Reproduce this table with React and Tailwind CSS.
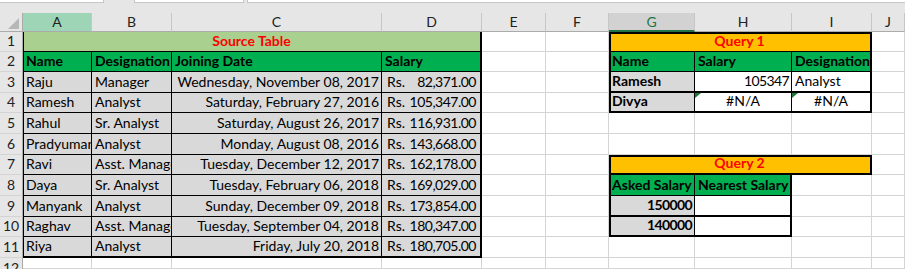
import React from 'react';

const R = { g: 'border-r border-r-[#d4d4d4]', k: 'border-r border-r-black', K: 'border-r-2 border-r-black' };
const B = { g: 'border-b border-b-[#d4d4d4]', k: 'border-b border-b-black', K: 'border-b-2 border-b-black' };
const SH = {
  n: '',
  l1: 'shadow-[inset_1px_0_0_#000]',
  l2: 'shadow-[inset_2px_0_0_#000]',
  l2t2: 'shadow-[inset_2px_0_0_#000,inset_0_2px_0_#000]',
};
const BG = { w: 'bg-white', gr: 'bg-[#d9d9d9]', gn: 'bg-[#00b050]', lg: 'bg-[#a9d08e]', or: 'bg-[#ffc000]' };
const AL = {
  l: 'justify-start pl-[3px]',
  r: 'justify-end pr-[2px]',
  c: 'justify-center',
  s: 'justify-between pl-[5px] pr-[4px]',
};
const SPAN = { 1: '', 3: 'col-span-3', 4: 'col-span-4' };

function Cell({ span = 1, bg = 'w', r = 'g', b = 'g', sh = 'n', al = 'l', bold = false, red = false, tri = false, num = false, children }) {
  return (
    <div
      className={[
        'relative flex items-end overflow-hidden whitespace-nowrap pb-[2px] leading-[16px]',
        SPAN[span],
        BG[bg],
        R[r],
        B[b],
        SH[sh],
        AL[al],
        bold ? 'font-bold' : '',
        red ? 'text-[#ff0000]' : 'text-black',
        num ? 'tracking-[-0.6px]' : '',
      ].join(' ')}
    >
      {tri && (
        <svg className="absolute left-0 top-0" width="6" height="5" viewBox="0 0 6 5">
          <polygon points="0,0 6,0 0,5" fill="#1e7a3c" />
        </svg>
      )}
      {children}
    </div>
  );
}

function RowHead({ n, cut = false }) {
  if (cut) {
    return (
      <div className="overflow-hidden bg-[#e6e6e6] border-r border-r-[#ababab] text-[#222]">
        <div className="h-[20px] flex items-end justify-center pb-[2px] leading-[16px]">{n}</div>
      </div>
    );
  }
  return (
    <div className="flex items-end justify-center pb-[2px] leading-[16px] bg-[#e6e6e6] border-r border-r-[#ababab] border-b border-b-[#d4d4d4] text-[#222]">
      {n}
    </div>
  );
}

function ColHead({ children, variant = 'n' }) {
  const v = {
    n: 'bg-[#e6e6e6] border-b border-b-[#ababab] text-[#222]',
    a: 'bg-[#9fd5b7] border-b border-b-[#ababab] text-[#222]',
    g: 'bg-[#d2d2d2] border-b-2 border-b-[#217346] text-[#217346]',
  }[variant];
  return (
    <div className={'flex items-center justify-center border-r border-r-[#c6c6c6] leading-[16px] ' + v}>{children}</div>
  );
}

const src = [
  ['Raju', 'Manager', 'Wednesday, November 08, 2017', '82,371.00'],
  ['Ramesh', 'Analyst', 'Saturday, February 27, 2016', '105,347.00'],
  ['Rahul', 'Sr. Analyst', 'Saturday, August 26, 2017', '116,931.00'],
  ['Pradyuman', 'Analyst', 'Monday, August 08, 2016', '143,668.00'],
  ['Ravi', 'Asst. Manager', 'Tuesday, December 12, 2017', '162,178.00'],
  ['Daya', 'Sr. Analyst', 'Tuesday, February 06, 2018', '169,029.00'],
  ['Manyank', 'Analyst', 'Sunday, December 09, 2018', '173,854.00'],
  ['Raghav', 'Asst. Manager', 'Tuesday, September 04, 2018', '180,347.00'],
  ['Riya', 'Analyst', 'Friday, July 20, 2018', '180,705.00'],
];

function right(rowNum) {
  switch (rowNum) {
    case 3:
      return [
        <Cell key="g" bg="gr" bold sh="l2" r="k" b="K">Ramesh</Cell>,
        <Cell key="h" r="k" b="K" al="r" num>105347</Cell>,
        <Cell key="i" r="K" b="K">Analyst</Cell>,
      ];
    case 4:
      return [
        <Cell key="g" bg="gr" bold sh="l2" r="k" b="K">Divya</Cell>,
        <Cell key="h" r="k" b="K" al="c" tri>#N/A</Cell>,
        <Cell key="i" r="K" b="K" al="c" tri>#N/A</Cell>,
      ];
    case 7:
      return [
        <Cell key="g" span={3} bg="or" bold red al="c" sh="l2t2" r="K" b="K">Query 2</Cell>,
      ];
    case 8:
      return [
        <Cell key="g" bg="gn" bold sh="l2" r="k" b="k">Asked Salary</Cell>,
        <Cell key="h" bg="gn" bold r="K" b="k">Nearest Salary</Cell>,
        <Cell key="i" />,
      ];
    case 9:
      return [
        <Cell key="g" bg="gr" bold al="r" sh="l2" r="k" b="K" num>150000</Cell>,
        <Cell key="h" r="K" b="K" />,
        <Cell key="i" />,
      ];
    case 10:
      return [
        <Cell key="g" bg="gr" bold al="r" sh="l2" r="k" b="K" num>140000</Cell>,
        <Cell key="h" r="K" b="K" />,
        <Cell key="i" />,
      ];
    default:
      return [<Cell key="g" />, <Cell key="h" />, <Cell key="i" />];
  }
}

export default function App() {
  return (
    <div className="w-[905px] h-[269px] overflow-hidden bg-white [font-family:Lato,sans-serif] text-[14px]">
      <div className="h-[13px] bg-[#e6e6e6] flex">
        <div className="w-[104px] h-[3px] bg-white border-r border-b border-[#c6c6c6]" />
        <div className="ml-[30px] w-[110px] h-[3px] bg-white border-x border-b border-[#c6c6c6]" />
        <div className="ml-[3px] flex-1 h-[3px] bg-white border-l border-b border-[#c6c6c6]" />
      </div>
      <div className="grid grid-cols-[23px_69px_80px_210px_100px_64px_63px_86px_97px_80px_33px] grid-rows-[19px_20px_20px_21px_20px_21px_21px_20px_21px_21px_20px_21px_11px]">
        <div className="relative bg-[#e6e6e6] border-r border-r-[#ababab] border-b border-b-[#ababab]">
          <svg className="absolute left-0 top-0" width="22" height="18" viewBox="0 0 22 18">
            <polygon points="19,5 19,16 8,16" fill="#b7b7b7" />
          </svg>
        </div>
        <ColHead variant="a">A</ColHead>
        <ColHead>B</ColHead>
        <ColHead>C</ColHead>
        <ColHead>D</ColHead>
        <ColHead>E</ColHead>
        <ColHead>F</ColHead>
        <ColHead variant="g">G</ColHead>
        <ColHead>H</ColHead>
        <ColHead>I</ColHead>
        <ColHead>J</ColHead>

        <RowHead n={1} />
        <Cell span={4} bg="lg" bold red al="c" sh="l1" r="K" b="k">Source Table</Cell>
        <Cell />
        <Cell />
        <Cell span={3} bg="or" bold red al="c" sh="l2t2" r="K" b="k">Query 1</Cell>
        <Cell />

        <RowHead n={2} />
        <Cell bg="gn" bold sh="l1" r="k" b="k">Name</Cell>
        <Cell bg="gn" bold r="k" b="k">Designation</Cell>
        <Cell bg="gn" bold r="k" b="k">Joining Date</Cell>
        <Cell bg="gn" bold r="K" b="k">Salary</Cell>
        <Cell />
        <Cell />
        <Cell bg="gn" bold sh="l2" r="k" b="k">Name</Cell>
        <Cell bg="gn" bold r="k" b="k">Salary</Cell>
        <Cell bg="gn" bold r="K" b="k">Designation</Cell>
        <Cell />

        {src.map((row, i) => {
          const n = i + 3;
          const bb = n === 11 ? 'K' : 'k';
          return (
            <React.Fragment key={n}>
              <RowHead n={n} />
              <Cell bg="gr" sh="l1" r="k" b={bb}>{row[0]}</Cell>
              <Cell bg="gr" r="k" b={bb}>{row[1]}</Cell>
              <Cell bg="gr" r="k" b={bb} al="r">{row[2]}</Cell>
              <Cell bg="gr" r="K" b={bb} al="s">
                <span>Rs.</span>
                <span className="tracking-[-0.5px]">{row[3]}</span>
              </Cell>
              <Cell />
              <Cell />
              {right(n)}
              <Cell />
            </React.Fragment>
          );
        })}

        <RowHead n={12} cut />
        {['A', 'B', 'C', 'D', 'E', 'F', 'G', 'H', 'I', 'J'].map((c) => (
          <Cell key={c} />
        ))}
      </div>
    </div>
  );
}
